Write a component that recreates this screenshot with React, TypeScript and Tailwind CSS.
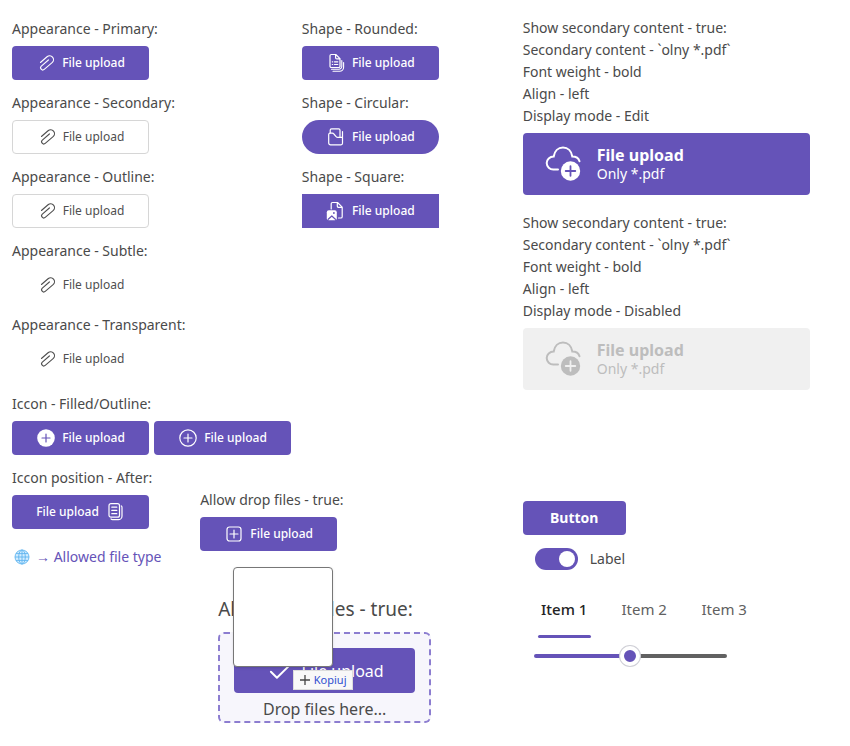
import { useState } from "react";
import type { ReactNode } from "react";

type IconProps = { className?: string };

function Svg({ className = "size-5", children }: IconProps & { children: ReactNode }) {
  return (
    <svg viewBox="0 0 20 20" className={className} fill="none" stroke="currentColor" strokeWidth="1.2" strokeLinecap="round" strokeLinejoin="round" aria-hidden="true">
      {children}
    </svg>
  );
}

const AttachIcon = () => (
  <Svg>
    <path stroke="none" fill="currentColor" transform="translate(10.5 9.800) rotate(4) scale(1.1) translate(-10 -10)" d="M4.83 10.48l5.65-5.65a3 3 0 0 1 4.25 4.24L8 15.8a1.5 1.5 0 0 1-2.12-2.12l6-6.01a.5.5 0 1 0-.7-.71l-6.01 6.01a2.5 2.5 0 0 0 3.53 3.54l6.71-6.72a4 4 0 1 0-5.65-5.66L4.12 9.78a.5.5 0 0 0 .7.7z" />
  </Svg>
);

const DocumentsIcon = () => (
  <Svg>
    <path d="M5.300 1.500h4.500l4.200 4.200v7.500a1.300 1.300 0 0 1-1.300 1.300H5.300A1.300 1.300 0 0 1 4 13.200V2.800a1.300 1.300 0 0 1 1.300-1.300zM9.600 1.500v3.200a1.200 1.200 0 0 0 1.200 1.200H14M6.300 8.800h.4M8.500 8.800h3.300M6.300 11.500h.4M8.500 11.500h3.300" />
    <path d="M5.500 16.300h7.300a3 3 0 0 0 3-3V7.500M7 18.200h6.700a3.900 3.900 0 0 0 3.900-3.900V9.500" strokeWidth="1.100" />
  </Svg>
);

const FolderDocIcon = () => (
  <Svg>
    <path d="M4.200 6V3.200A1.300 1.300 0 0 1 5.500 1.900h7.200A1.300 1.300 0 0 1 14 3.200V9.500" />
    <path d="M2.700 7.500A1.300 1.300 0 0 1 4 6.200h2.300c.7 0 1.200.3 1.600.8l2.200 2.600c.4.500 1 .8 1.700.800h4.700V4.500v11.800a1.500 1.500 0 0 1-1.500 1.500H4.500a1.800 1.800 0 0 1-1.800-1.800z" />
  </Svg>
);

const ImageDocIcon = () => (
  <Svg>
    <path d="M5.200 8V2.800A1.300 1.300 0 0 1 6.500 1.500h5l4.700 4.700v9.500a1.300 1.300 0 0 1-1.300 1.300h-2.400M11.300 1.500v3.600a1.300 1.300 0 0 0 1.300 1.300h3.400" />
    <rect x="0.800" y="9.300" width="10" height="10" rx="2" fill="currentColor" stroke="none" />
    <path d="M2.200 18.300l3.600-3.300 3.600 3.300" stroke="#6553b8" />
    <circle cx="7.900" cy="12" r="0.900" fill="#6553b8" stroke="none" />
  </Svg>
);

const AddFilledIcon = () => (
  <Svg>
    <circle cx="10" cy="10" r="8.800" fill="currentColor" stroke="none" />
    <path d="M10 6v8M6 10h8" stroke="#6553b8" />
  </Svg>
);

const AddCircleIcon = () => (
  <Svg>
    <circle cx="10" cy="10" r="8.200" />
    <path d="M10 6v8M6 10h8" />
  </Svg>
);

const AddSquareIcon = () => (
  <Svg>
    <rect x="3" y="3" width="14" height="14" rx="2.500" />
    <path d="M10 6v8M6 10h8" />
  </Svg>
);

const CopyTextIcon = () => (
  <Svg>
    <rect x="4" y="1.700" width="10.500" height="13.500" rx="2" />
    <path d="M6.800 5.200h5M6.800 8.400h5M6.800 11.700h5M16.300 3.900c.5.400.7.900.7 1.500v8.500a3.800 3.800 0 0 1-3.800 3.800H7.500c-.6 0-1.100-.3-1.500-.8" />
  </Svg>
);

const CheckIcon = () => (
  <Svg className="size-7">
    <path d="M3.500 10.500l4.300 4.300L16.800 6" strokeWidth="1.400" />
  </Svg>
);

function CloudAddIcon({ plus }: { plus: string }) {
  return (
    <svg viewBox="0 0 36 36" className="size-9 shrink-0" fill="none" stroke="currentColor" strokeWidth="2" strokeLinecap="round" aria-hidden="true">
      <path d="M13 23.500H8.500a6.600 6.600 0 0 1-6.800-6.500c0-3.600 3-6.500 7-6.500C9.500 5 13.200 1.500 18 1.500s8.500 3.500 9.300 9c3.600 0 6.400 2 7.200 4.700" />
      <circle cx="25.500" cy="25" r="9.700" fill="currentColor" stroke="none" />
      <path d="M25.500 20.200v9.600M20.700 25h9.600" stroke={plus} strokeWidth="1.800" />
    </svg>
  );
}

const GlobeIcon = () => (
  <svg viewBox="0 0 16 16" className="size-4 shrink-0" fill="#d3edff" stroke="#5fb4ef" strokeWidth="0.900" aria-hidden="true">
    <circle cx="8" cy="8" r="7" />
    <ellipse cx="8" cy="8" rx="3.300" ry="7" />
    <path d="M8 1v14M1 8h14M2 4.600h12M2 11.400h12" />
  </svg>
);

const looks = {
  primary: "rounded bg-[#6553b8] font-medium text-white",
  circular: "rounded-full bg-[#6553b8] font-medium text-white",
  square: "bg-[#6553b8] font-medium text-white",
  outline: "rounded border border-[#d6d6d6] bg-white text-[#4f4f4f]",
  plain: "rounded text-[#4f4f4f]",
};

function UploadButton({ look = "primary", icon, after }: { look?: keyof typeof looks; icon: ReactNode; after?: boolean }) {
  return (
    <button type="button" className={`flex h-[34px] w-[137px] items-center justify-center gap-1.5 text-xs ${looks[look]}`}>
      {!after && icon}
      <span>File upload</span>
      {after && icon}
    </button>
  );
}

function Sample({ title, children }: { title: string; children: ReactNode }) {
  return (
    <section>
      <h2 className="mb-[5px] leading-6 whitespace-nowrap">{title}</h2>
      <div className="flex gap-[5px]">{children}</div>
    </section>
  );
}

function SecondarySample({ mode, disabled }: { mode: string; disabled?: boolean }) {
  return (
    <section>
      <div className="mb-[6px] leading-[22px] whitespace-nowrap">
        <p>Show secondary content - true:</p>
        <p>Secondary content - `olny *.pdf`</p>
        <p>Font weight - bold</p>
        <p>Align - left</p>
        <p>Display mode - {mode}</p>
      </div>
      <button
        type="button"
        disabled={disabled}
        className={`flex h-[62px] w-full items-center gap-4 rounded px-[22px] text-left ${disabled ? "bg-[#f0f0f0] text-[#bdbdbd]" : "bg-[#6553b8] text-white"}`}
      >
        <CloudAddIcon plus={disabled ? "#f0f0f0" : "#6553b8"} />
        <span className="flex flex-col">
          <span className="text-base leading-[19px] font-bold">File upload</span>
          <span className="text-sm leading-[18px]">Only *.pdf</span>
        </span>
      </button>
    </section>
  );
}

function DropPreview() {
  return (
    <section className="relative mt-[46px] ml-[18px] w-[213px]">
      <h2 className="mb-[11px] text-[19px] leading-6 whitespace-nowrap">Allow drop files - true:</h2>
      <div className="flex h-[91px] flex-col items-center rounded-md border-2 border-dashed border-[#8c7dd0] bg-[#f7f6fc] pt-[14px]">
        <button type="button" className="flex h-[45px] w-[181px] shrink-0 items-center justify-center gap-2 rounded bg-[#6553b8] text-base text-white">
          <CheckIcon />
          <span>File upload</span>
        </button>
        <p className="mt-1 text-base leading-6">Drop files here...</p>
      </div>
      <div className="absolute -top-[30px] left-[15px] h-[100px] w-[100px] rounded border border-[#777] bg-white shadow-sm" />
      <div className="absolute top-[73px] left-[75px] flex h-[20px] w-[60px] items-center justify-center gap-1 border border-[#dcdcdc] bg-[#f8f8f8] text-[11px] text-[#2f4fd0]">
        <svg viewBox="0 0 10 10" className="size-2.5" stroke="#444" strokeWidth="1.300" aria-hidden="true">
          <path d="M5 0v10M0 5h10" />
        </svg>
        <span>Kopiuj</span>
      </div>
    </section>
  );
}

function Controls() {
  const [tab, setTab] = useState(1);
  const [on, setOn] = useState(true);
  const [value, setValue] = useState(50);
  return (
    <section className="mt-[111px]">
      <button type="button" className="h-[34px] w-[103px] rounded bg-[#6553b8] text-sm font-bold text-white">
        Button
      </button>
      <label className="mt-[13px] ml-3 flex w-fit items-center gap-3 text-sm leading-[22px]">
        <input
          type="checkbox"
          role="switch"
          checked={on}
          onChange={(e) => setOn(e.target.checked)}
          className="flex h-[22px] w-[43px] appearance-none items-center rounded-full bg-[#aaa] px-[3px] before:size-4 before:rounded-full before:bg-white checked:justify-end checked:bg-[#6553b8]"
        />
        Label
      </label>
      <div role="tablist" className="mt-6 ml-[15px] flex gap-[27px] text-[15px] text-[#616161]">
        {[1, 2, 3].map((n) => (
          <button
            key={n}
            type="button"
            role="tab"
            aria-selected={tab === n}
            onClick={() => setTab(n)}
            className={`flex h-[44px] w-[53px] flex-col items-center justify-between pt-[5px] whitespace-nowrap after:h-[3px] after:w-full after:rounded-full ${tab === n ? "font-medium text-[#242424] after:bg-[#6553b8]" : "after:bg-transparent"}`}
          >
            Item {n}
          </button>
        ))}
      </div>
      <input
        type="range"
        aria-label="Value"
        value={value}
        onChange={(e) => setValue(Number(e.target.value))}
        style={{ backgroundImage: `linear-gradient(to right, #6553b8 ${value}%, #616161 ${value}%)` }}
        className="mt-[16px] ml-[11px] block h-1 w-[193px] appearance-none rounded-full [&::-webkit-slider-thumb]:size-5 [&::-webkit-slider-thumb]:appearance-none [&::-webkit-slider-thumb]:rounded-full [&::-webkit-slider-thumb]:border-4 [&::-webkit-slider-thumb]:border-white [&::-webkit-slider-thumb]:bg-[#6553b8] [&::-webkit-slider-thumb]:shadow-[0_0_0_1px_#cfcfd6]"
      />
    </section>
  );
}

export default function App() {
  return (
    <main className="grid min-h-screen grid-cols-[16fr_9fr] bg-white pt-[17px] pr-10 pl-3 font-['Noto_Sans','Open_Sans',sans-serif] text-sm text-[#4a4a4a]">
      <div className="min-w-0">
        <div className="grid grid-cols-[21fr_16fr]">
          <div className="flex flex-col gap-[11px]">
            <Sample title="Appearance - Primary:"><UploadButton icon={<AttachIcon />} /></Sample>
            <Sample title="Appearance - Secondary:"><UploadButton look="outline" icon={<AttachIcon />} /></Sample>
            <Sample title="Appearance - Outline:"><UploadButton look="outline" icon={<AttachIcon />} /></Sample>
            <Sample title="Appearance - Subtle:"><UploadButton look="plain" icon={<AttachIcon />} /></Sample>
            <Sample title="Appearance - Transparent:"><UploadButton look="plain" icon={<AttachIcon />} /></Sample>
          </div>
          <div className="flex flex-col gap-[11px]">
            <Sample title="Shape - Rounded:"><UploadButton icon={<DocumentsIcon />} /></Sample>
            <Sample title="Shape - Circular:"><UploadButton look="circular" icon={<FolderDocIcon />} /></Sample>
            <Sample title="Shape - Square:"><UploadButton look="square" icon={<ImageDocIcon />} /></Sample>
          </div>
        </div>
        <div className="mt-4">
          <Sample title="Iccon - Filled/Outline:">
            <UploadButton icon={<AddFilledIcon />} />
            <UploadButton icon={<AddCircleIcon />} />
          </Sample>
        </div>
        <div className="mt-[11px] grid grid-cols-[7fr_12fr]">
          <div>
            <Sample title="Iccon position - After:"><UploadButton after icon={<CopyTextIcon />} /></Sample>
            <a href="#types" className="mt-4 flex items-center gap-1.5 px-0.5 leading-6 whitespace-nowrap text-[#6553b8]">
              <GlobeIcon />
              → Allowed file type
            </a>
          </div>
          <div className="pt-[22px]">
            <Sample title="Allow drop files - true:"><UploadButton icon={<AddSquareIcon />} /></Sample>
            <DropPreview />
          </div>
        </div>
      </div>
      <div className="min-w-0">
        <div className="flex flex-col gap-[17px]">
          <SecondarySample mode="Edit" />
          <SecondarySample mode="Disabled" disabled />
        </div>
        <Controls />
      </div>
    </main>
  );
}
